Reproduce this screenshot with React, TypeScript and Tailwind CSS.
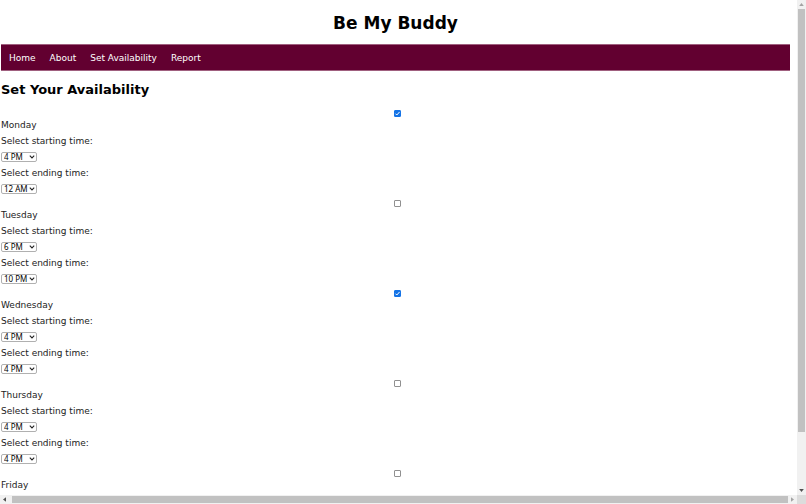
const links = ['Home', 'About', 'Set Availability', 'Report'];

const hours = ['12 AM', '4 PM', '6 PM', '10 PM'];

type Day = { name: string; on: boolean; times?: [string, string] };

const days: Day[] = [
  { name: 'Monday', on: true, times: ['4 PM', '12 AM'] },
  { name: 'Tuesday', on: false, times: ['6 PM', '10 PM'] },
  { name: 'Wednesday', on: true, times: ['4 PM', '4 PM'] },
  { name: 'Thursday', on: false, times: ['4 PM', '4 PM'] },
  { name: 'Friday', on: false },
];

function TimeSelect({ id, label, value }: { id: string; label: string; value: string }) {
  return (
    <>
      <label htmlFor={id} className="block h-4 leading-4">{label}</label>
      <div className="flex h-4 items-center">
        <div className="grid w-9 items-center">
          <select
            id={id}
            defaultValue={value}
            className="col-start-1 row-start-1 h-[10px] appearance-none rounded-[2px] border border-[#b0b0b0] bg-white pl-0.5 font-['Noto_Sans','Open_Sans',sans-serif] text-[8px] leading-[8px] text-black"
          >
            {hours.map((h) => <option key={h}>{h}</option>)}
          </select>
          <svg viewBox="0 0 6 4" className="pointer-events-none z-10 col-start-1 row-start-1 mr-0.5 h-1 w-1.5 justify-self-end" aria-hidden="true">
            <path d="M.8.7 3 2.9 5.2.7" fill="none" stroke="#222" strokeWidth="1.1" />
          </svg>
        </div>
      </div>
    </>
  );
}

function DayBlock({ day }: { day: Day }) {
  const id = day.name.toLowerCase();
  return (
    <section className="pb-[3px]">
      <div className="flex h-[7px] items-center justify-center pl-1">
        <span className="grid place-items-center">
          <input
            id={id}
            type="checkbox"
            defaultChecked={day.on}
            className="peer col-start-1 row-start-1 size-[7px] appearance-none rounded-[1px] border border-[#909090] bg-white checked:border-[#1473e6] checked:bg-[#1473e6]"
          />
          <svg viewBox="0 0 7 7" className="pointer-events-none col-start-1 row-start-1 hidden size-[7px] peer-checked:block" aria-hidden="true">
            <path d="M1.5 3.7 2.8 5 5.6 1.9" fill="none" stroke="white" strokeWidth="1" />
          </svg>
        </span>
      </div>
      <label htmlFor={id} className="block h-4 leading-4">{day.name}</label>
      {day.times && (
        <>
          <TimeSelect id={`${id}-start`} label="Select starting time:" value={day.times[0]} />
          <TimeSelect id={`${id}-end`} label="Select ending time:" value={day.times[1]} />
        </>
      )}
    </section>
  );
}

function Arrow({ className, fill }: { className: string; fill: string }) {
  return (
    <svg viewBox="0 0 5 5" className={`size-[5px] ${className}`} aria-hidden="true">
      <path d="M2.5 1 4.8 4H.2Z" fill={fill} />
    </svg>
  );
}

export default function App() {
  return (
    <div className="grid h-screen grid-cols-[minmax(0,1fr)_9px] grid-rows-[minmax(0,1fr)_9px] bg-white font-['DejaVu_Sans',Verdana,sans-serif] text-[9px] text-[#222]">
      <main className="overflow-hidden pr-[7px] pl-px">
        <h1 className="flex h-11 items-center justify-center pt-1 text-[17px] font-bold text-black">Be My Buddy</h1>
        <nav className="flex h-[27px] items-center border-y border-y-[#a0607f] bg-[#620030] px-px">
          {links.map((l) => (
            <a key={l} href="#" className="px-[7px] leading-4 text-white">{l}</a>
          ))}
        </nav>
        <h2 className="flex h-[39px] items-center pb-0.5 text-[13px] font-bold text-black">Set Your Availability</h2>
        {days.map((d) => <DayBlock key={d.name} day={d} />)}
      </main>
      <div className="flex flex-col items-center bg-[#f1f1f1]" aria-hidden="true">
        <div className="flex h-[9px] items-center"><Arrow className="" fill="#a3a3a3" /></div>
        <div className="w-[7px] grow-[423] bg-[#c1c1c1]" />
        <div className="grow-[54]" />
        <div className="flex h-[9px] items-center"><Arrow className="rotate-180" fill="#505050" /></div>
      </div>
      <div className="flex items-center bg-[#f1f1f1]" aria-hidden="true">
        <div className="flex w-3 justify-center pr-1"><Arrow className="-rotate-90" fill="#505050" /></div>
        <div className="h-[7px] grow bg-[#c1c1c1]" />
        <div className="flex w-[9px] justify-center"><Arrow className="rotate-90" fill="#a3a3a3" /></div>
      </div>
      <div className="bg-[#dcdcdc]" />
    </div>
  );
}
